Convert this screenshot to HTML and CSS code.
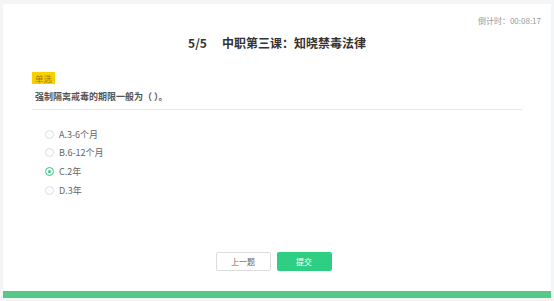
FILE: index.html
```html
<!DOCTYPE html>
<html lang="zh-CN">
<head>
    <meta charset="UTF-8">
    <meta name="viewport" content="width=device-width, initial-scale=1.0">
    <title>中职第三课：知晓禁毒法律</title>
    <link rel="stylesheet" href="styles.css">
</head>
<body>
    <div class="exam-card">
        <div class="timer">倒计时：00:08:17</div>
        <h1 class="title"><span class="progress">5/5</span>中职第三课：知晓禁毒法律</h1>

        <div class="question">
            <span class="type-badge">单选</span>
            <p class="question-text">强制隔离戒毒的期限一般为（ ）。</p>
        </div>

        <ul class="options">
            <li class="option"><span class="radio"></span>A.3-6个月</li>
            <li class="option"><span class="radio"></span>B.6-12个月</li>
            <li class="option selected"><span class="radio"></span>C.2年</li>
            <li class="option"><span class="radio"></span>D.3年</li>
        </ul>

        <div class="actions">
            <button class="btn btn-prev">上一题</button>
            <button class="btn btn-submit">提交</button>
        </div>

        <div class="progress-bar"></div>
    </div>
</body>
</html>
```

FILE: styles.css
```css
html, body {
    margin: 0;
    padding: 0;
}
body {
    font-family: "Noto Sans CJK SC", "Noto Sans", sans-serif;
    background-color: #f4f5f7;
    padding: 4px 3px 3px;
    height: 301px;
    box-sizing: border-box;
}
.exam-card {
    background-color: #fff;
    height: 294px;
    display: flex;
    flex-direction: column;
}
.timer {
    text-align: right;
    font-size: 8px;
    line-height: 10px;
    color: #999;
    padding: 12px 10px 0;
}
.title {
    margin: 9px 0 0;
    text-align: center;
    font-size: 12px;
    line-height: 16px;
    font-weight: bold;
    color: #333;
}
.progress {
    margin-right: 15px;
}
.question {
    margin: 21px 29px 0;
    border-bottom: 1px solid #e6e6e6;
    padding-bottom: 6px;
    display: flex;
    flex-direction: column;
    align-items: flex-start;
}
.type-badge {
    display: block;
    background-color: #f6d100;
    color: #a37a00;
    font-size: 8.5px;
    line-height: 12px;
    padding: 0 3px;
}
.question-text {
    margin: 7px 0 0 3px;
    font-size: 9px;
    line-height: 12px;
    font-weight: bold;
    color: #555;
}
.options {
    list-style: none;
    margin: 15px 0 0;
    padding: 0 0 0 42px;
}
.option {
    display: flex;
    align-items: center;
    height: 18.67px;
    font-size: 9px;
    color: #666;
}
.radio {
    width: 9px;
    height: 9px;
    border: 1px solid #ddd;
    border-radius: 50%;
    box-sizing: border-box;
    margin-right: 5px;
    display: flex;
    align-items: center;
    justify-content: center;
}
.selected .radio {
    border-color: #2ecc80;
}
.selected .radio::after {
    content: "";
    width: 3px;
    height: 3px;
    border-radius: 50%;
    background-color: #2ecc80;
}
.actions {
    margin-top: 52px;
    display: flex;
    justify-content: center;
    gap: 6px;
    padding-right: 7px;
}
.btn {
    width: 55px;
    height: 19px;
    font-family: inherit;
    font-size: 8px;
    border-radius: 2px;
    padding: 0;
    cursor: pointer;
}
.btn-prev {
    background-color: #fff;
    border: 1px solid #ddd;
    color: #666;
}
.btn-submit {
    background-color: #2ecf83;
    border: none;
    color: #fff;
}
.progress-bar {
    margin-top: auto;
    height: 7px;
    background-color: #56c987;
}
```
